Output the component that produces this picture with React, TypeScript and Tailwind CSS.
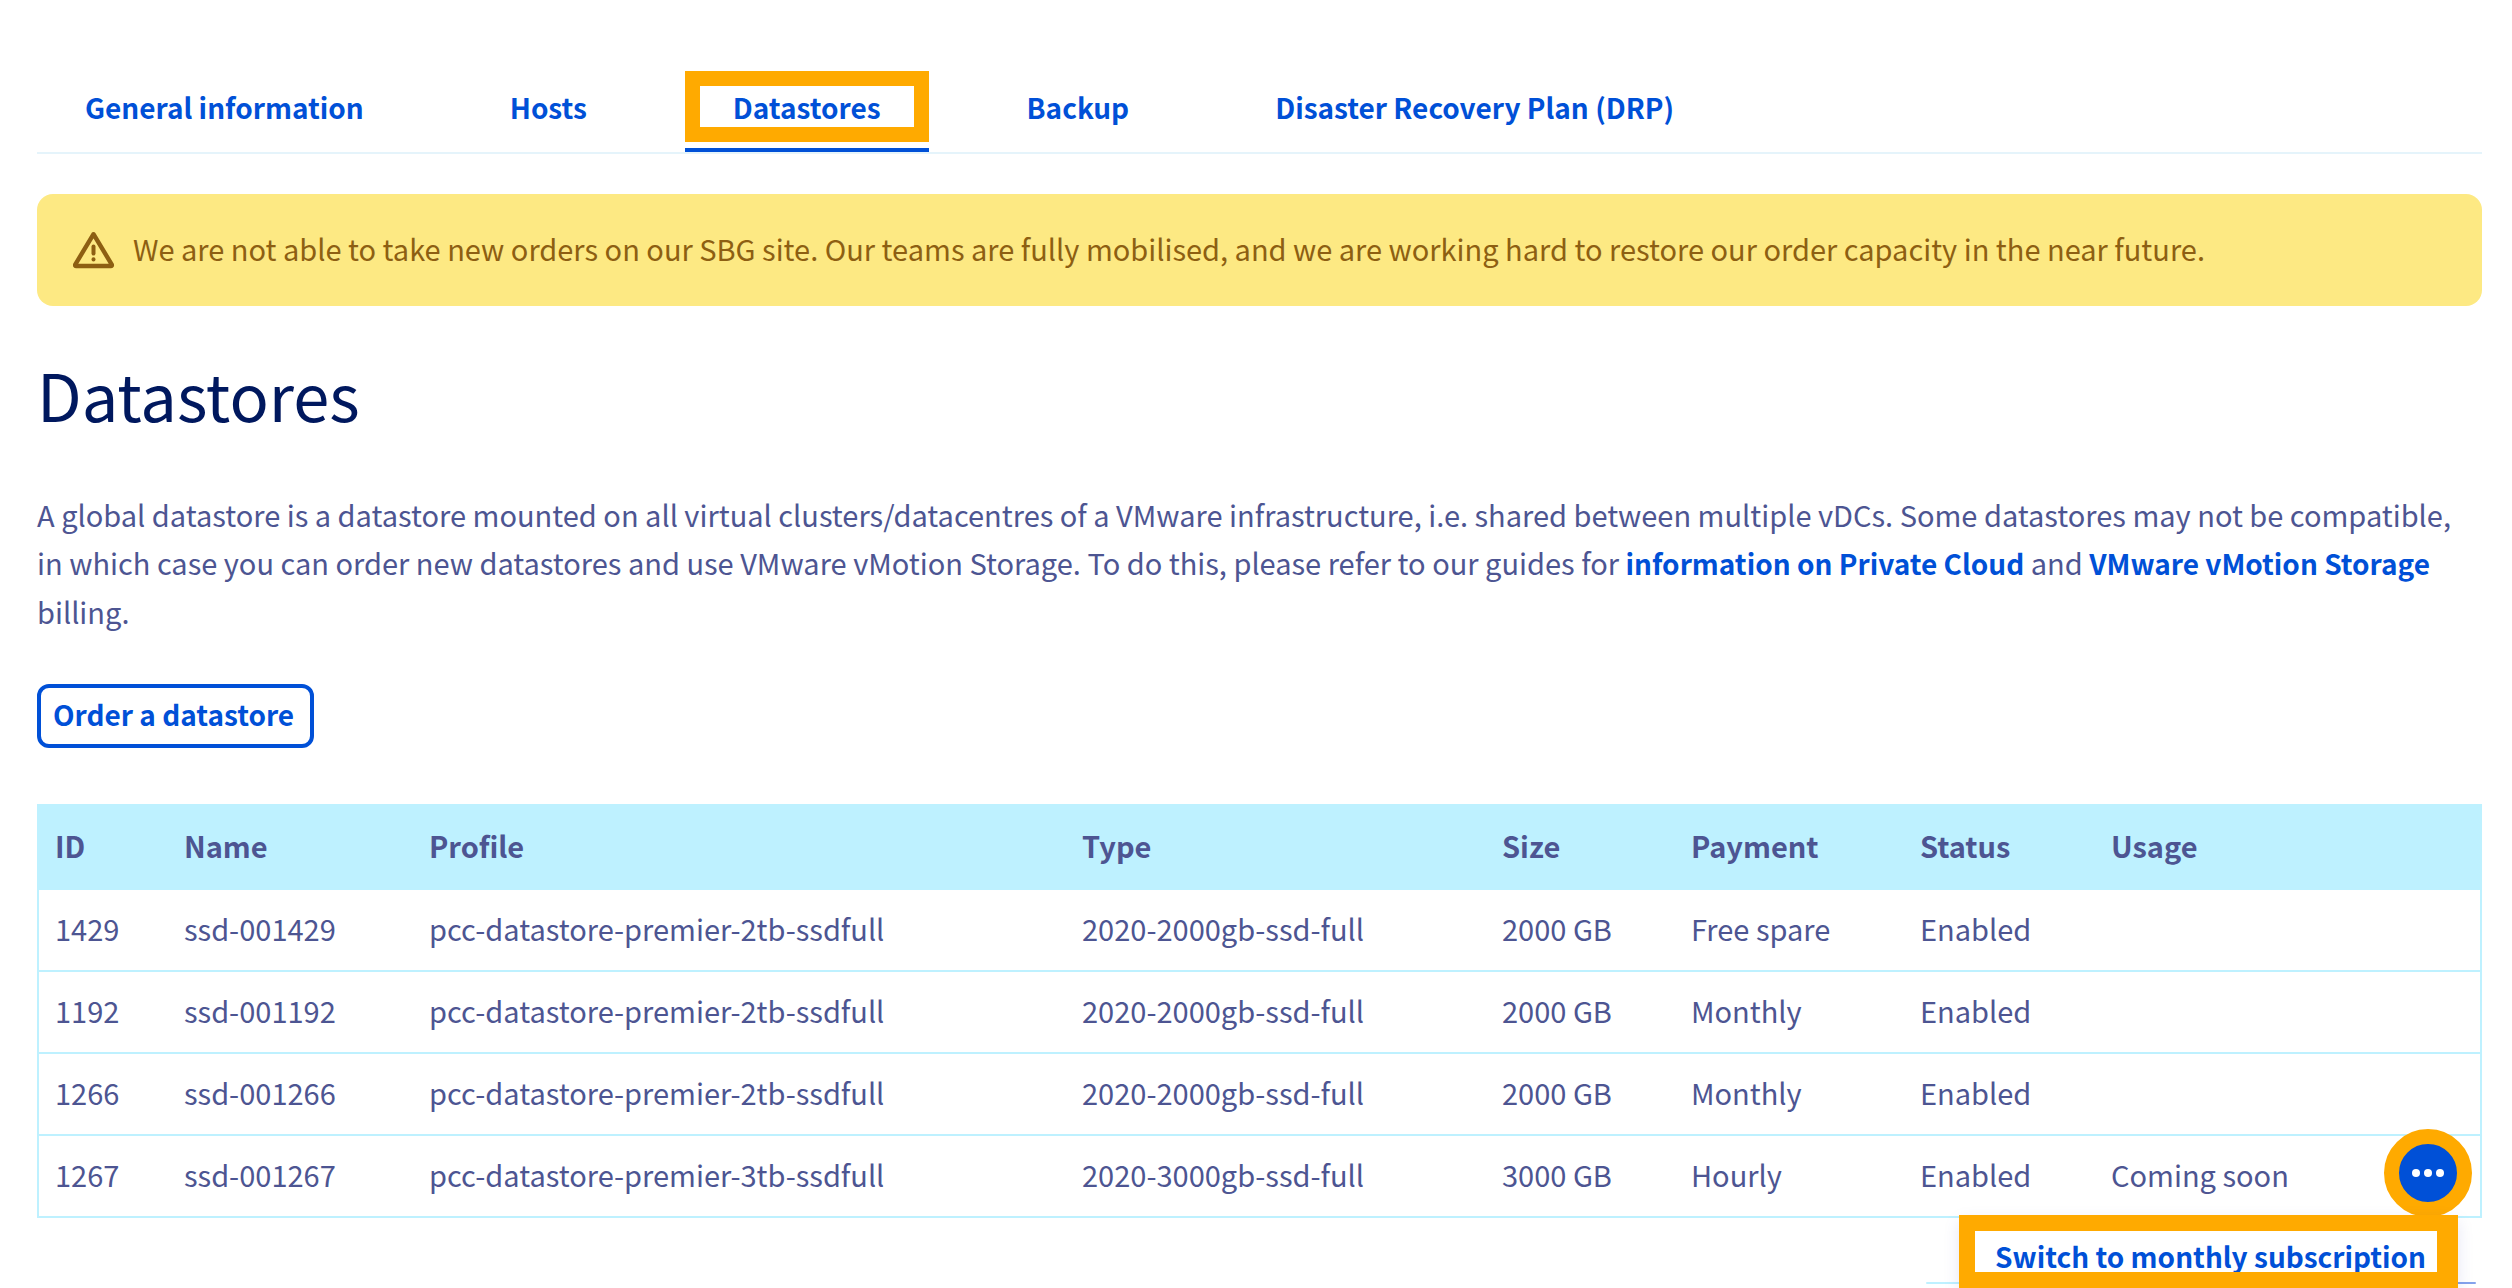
const tabs = ["General information", "Hosts", "Datastores", "Backup", "Disaster Recovery Plan (DRP)"];

const columns = [
    { label: "ID", width: "w-[129px]" },
    { label: "Name", width: "w-[245px]" },
    { label: "Profile", width: "w-[653px]" },
    { label: "Type", width: "w-[420px]" },
    { label: "Size", width: "w-[189px]" },
    { label: "Payment", width: "w-[229px]" },
    { label: "Status", width: "w-[191px]" },
    { label: "Usage", width: "" },
];

const datastores = [
    { id: "1429", profile: "pcc-datastore-premier-2tb-ssdfull", type: "2020-2000gb-ssd-full", size: "2000 GB", payment: "Free spare", usage: "" },
    { id: "1192", profile: "pcc-datastore-premier-2tb-ssdfull", type: "2020-2000gb-ssd-full", size: "2000 GB", payment: "Monthly", usage: "" },
    { id: "1266", profile: "pcc-datastore-premier-2tb-ssdfull", type: "2020-2000gb-ssd-full", size: "2000 GB", payment: "Monthly", usage: "" },
    { id: "1267", profile: "pcc-datastore-premier-3tb-ssdfull", type: "2020-3000gb-ssd-full", size: "3000 GB", payment: "Hourly", usage: "Coming soon" },
];

function TabBar() {
    return (
        <nav className="flex gap-[50px] border-b-2 border-[#e5f4fb] pt-[71px]">
            {tabs.map((tab) => {
                const active = tab === "Datastores";
                return (
                    <a
                        key={tab}
                        href="#"
                        aria-current={active ? "page" : undefined}
                        className={`relative h-[81px] px-12 pt-3 ${active ? "border-b-4 border-[#0050d7]" : ""}`}
                    >
                        {active && <span className="absolute inset-x-0 top-0 h-[71px] border-[15px] border-[#ffaa00]" />}
                        {tab}
                    </a>
                );
            })}
        </nav>
    );
}

function WarningBanner() {
    return (
        <div role="alert" className="mt-10 flex h-28 items-center gap-[18px] rounded-2xl bg-[#fde983] px-9 text-[#8d5f12]">
            <svg viewBox="0 0 42 38" className="h-[38px] w-[42px] shrink-0" fill="none" stroke="currentColor" strokeLinecap="round" strokeLinejoin="round">
                <path d="M20.500 3.200 2.200 33.600Q1.800 35 3.200 35H37.800Q39.200 35 38.800 33.600Z" strokeWidth="4.400" />
                <path d="M20.500 15.500V22.500" strokeWidth="4" />
                <path d="M20.500 28.300V28.500" strokeWidth="4" />
            </svg>
            <p className="pb-1">
                We are not able to take new orders on our SBG site. Our teams are fully mobilised, and we are working hard to restore our order capacity in the near future.
            </p>
        </div>
    );
}

function ActionMenu() {
    return (
        <>
            <button aria-label="Actions" className="absolute -top-[7px] right-2 flex h-[88px] w-[88px] items-center justify-center rounded-full border-[15px] border-[#ffaa00] bg-[#0050d7]">
                <svg viewBox="0 0 32 8" className="h-2 w-8" fill="white">
                    <circle cx="4" cy="4" r="4" />
                    <circle cx="16" cy="4" r="4" />
                    <circle cx="28" cy="4" r="4" />
                </svg>
            </button>
            <div role="menu" className="absolute top-[82px] right-1 h-[66px] w-[550px] bg-white">
                <button role="menuitem" className="h-full w-full pt-[10px] pr-[50px] text-right text-[28px] font-bold text-[#0050d7]">
                    Switch to monthly subscription
                </button>
                <div className="absolute inset-x-0 bottom-0 h-[2px] rounded-full bg-linear-to-r from-[#bef1ff] from-50% to-[#85a3ec] to-50%" />
                <span className="pointer-events-none absolute -top-[3px] right-[18px] left-[33px] h-[73px] border-16 border-r-[21px] border-[#ffaa00] shadow-[0_6px_16px_#000e9c1a]" />
            </div>
        </>
    );
}

function DatastoreTable() {
    return (
        <table className="mt-14 w-full table-fixed border-separate border-spacing-0 border-x-2 border-[#bef1ff] text-left">
            <thead>
                <tr className="h-[86px] bg-[#bef1ff]">
                    {columns.map((column) => (
                        <th key={column.label} className={`${column.width} px-4 pb-1 font-bold`}>
                            {column.label}
                        </th>
                    ))}
                </tr>
            </thead>
            <tbody>
                {datastores.map((row) => (
                    <tr key={row.id} className="h-[82px] whitespace-nowrap [&>td]:border-b-2 [&>td]:border-[#bef1ff] [&>td]:px-4 [&>td]:pb-1">
                        <td>{row.id}</td>
                        <td>ssd-00{row.id}</td>
                        <td>{row.profile}</td>
                        <td>{row.type}</td>
                        <td>{row.size}</td>
                        <td>{row.payment}</td>
                        <td>Enabled</td>
                        <td className="relative">
                            {row.usage}
                            {row.usage && <ActionMenu />}
                        </td>
                    </tr>
                ))}
            </tbody>
        </table>
    );
}

export default function App() {
    return (
        <main className="min-h-screen overflow-hidden bg-white pr-[30px] pl-[37px] font-['Noto_Sans_CJK_SC',sans-serif] text-[29px] leading-[48px] text-[#4d5592] [&_a]:text-[28px] [&_a]:font-bold [&_a]:text-[#0050d7]">
            <TabBar />
            <WarningBanner />
            <h1 className="mt-10 text-[65px] leading-[96px] text-[#00185e]">Datastores</h1>
            <p className="mt-12">
                A global datastore is a datastore mounted on all virtual clusters/datacentres of a VMware infrastructure, i.e. shared between multiple vDCs. Some datastores may not be compatible, in which case you can order new datastores and use VMware vMotion Storage. To do this, please refer to our guides for <a href="#">information on Private Cloud</a> and <a href="#">VMware vMotion Storage</a> billing.
            </p>
            <button className="mt-[49px] flex h-16 items-center rounded-xl border-4 border-[#0050d7] pr-4 pb-1 pl-3 text-[28px] font-bold text-[#0050d7]">Order a datastore</button>
            <DatastoreTable />
        </main>
    );
}
